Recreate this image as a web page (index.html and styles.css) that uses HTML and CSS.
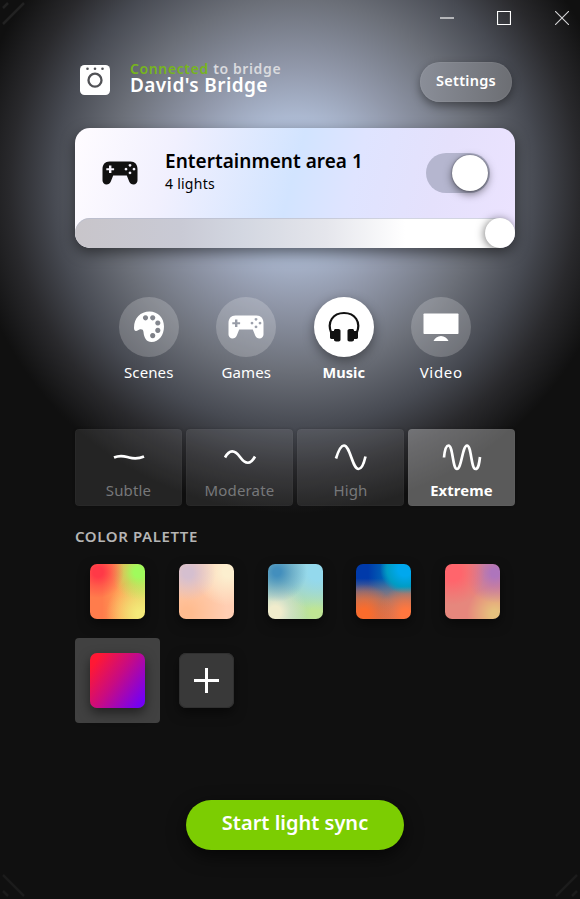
FILE: index.html
```html
<!DOCTYPE html>
<html lang="en">
<head>
<meta charset="utf-8">
<title>Light sync</title>
<link rel="stylesheet" href="styles.css">
</head>
<body>
<svg class="defs" width="0" height="0" aria-hidden="true">
  <symbol id="gamepad" viewBox="0 0 36 24">
    <path fill="currentColor" fill-rule="evenodd" d="M7.500.5h21C33 .5 35.500 3.500 35.500 8v11.500c0 2.200-1.700 4-4 4-2 0-3.500-1-4.300-3L24.800 14.500H11.200L8.800 20.500c-.8 2-2.300 3-4.300 3-2.300 0-4-1.800-4-4V8C.5 3.500 3 .5 7.500.5zM7 4.500v2.700H4.300v2H7v2.700h2.400V9.200h2.700v-2H9.400V4.500zM28 2.900a1.400 1.400 0 1 0 .01 0zM24 6.700a1.400 1.400 0 1 0 .01 0zM32 6.700a1.400 1.400 0 1 0 .01 0zM28 10.500a1.400 1.400 0 1 0 .01 0z"/>
  </symbol>
</svg>
<div class="window">
  <svg class="grip grip-tl" viewBox="0 0 26 26"><path d="M3 8 8 3M3 24 24 3"/></svg>
  <svg class="grip grip-bl" viewBox="0 0 26 26"><path d="M3 8 8 3M3 24 24 3"/></svg>
  <svg class="grip grip-br" viewBox="0 0 26 26"><path d="M3 8 8 3M3 24 24 3"/></svg>
  <div class="titlebar">
    <svg width="14" height="14" viewBox="0 0 14 14"><path d="M0 7h14" stroke="#b5b6b9" stroke-width="2"/></svg>
    <svg width="14" height="14" viewBox="0 0 14 14"><path d="M.5.5h13v13H.5z" fill="none" stroke="#fff" stroke-width="1.200"/></svg>
    <svg class="close" width="14" height="14" viewBox="0 0 14 14"><path d="M0 0l14 14M14 0 0 14" stroke="#d4d4d6" stroke-width="1.100"/></svg>
  </div>
  <header class="header">
    <svg class="bridge-icon" width="30" height="30" viewBox="0 0 30 30"><rect width="30" height="30" rx="4.500" fill="#fff"/><circle cx="15" cy="15.200" r="6.500" fill="none" stroke="#515256" stroke-width="2.300"/><g fill="#515256"><circle cx="7.500" cy="3.800" r="1.300"/><circle cx="15" cy="3.800" r="1.300"/><circle cx="22.500" cy="3.800" r="1.300"/></g></svg>
    <div class="bridge">
      <div class="status"><span>Connected</span> to bridge</div>
      <div class="name">David's Bridge</div>
    </div>
    <button class="settings">Settings</button>
  </header>
  <section class="area">
    <div class="area-main">
      <svg class="area-icon" width="36" height="24"><use href="#gamepad"/></svg>
      <div class="area-text">
        <div class="area-title">Entertainment area 1</div>
        <div class="area-sub">4 lights</div>
      </div>
      <div class="toggle"><div class="toggle-knob"></div></div>
    </div>
    <div class="slider"><div class="slider-knob"></div></div>
  </section>
  <nav class="modes">
    <div class="mode"><div class="disc"><svg width="32" height="32" viewBox="0 0 32 32"><path fill="#fff" fill-rule="evenodd" d="M16.500.5C25 .5 31 7 31 15.500 31 24 26 31 18.500 31c-5 0-7.500-4-8-10-.2-2.500-1.500-3-3.500-2.700-1.500.3-2.500 1.700-4 1.700C1.500 20 1 18.500 1 16.500 1 7 7.500.5 16.500.5zM12.500 4.200a2.600 2.600 0 1 0 .01 0zM19.700 4.200a2.600 2.600 0 1 0 .01 0zM24.800 9.400a2.600 2.600 0 1 0 .01 0zM24.800 16.800a2.600 2.600 0 1 0 .01 0zM19.700 22a2.600 2.600 0 1 0 .01 0z"/></svg></div><span>Scenes</span></div>
    <div class="mode"><div class="disc"><svg width="36" height="24"><use href="#gamepad"/></svg></div><span>Games</span></div>
    <div class="mode active"><div class="disc"><svg width="32" height="32" viewBox="0 0 32 32"><path d="M3 21C-1 11 5 2 16 2s17 9 13 19" fill="none" stroke="#111" stroke-width="2.200"/><path fill="#111" d="M2 20h4v-.5c0-1 .8-1.500 1.500-1.500h3c1 0 2 .7 2 1.800v9c0 1-.8 1.700-1.800 1.700H8c-1 0-2-.6-2-1.700V28H3.500c-1 0-1.500-.8-1.500-1.500zM30 20h-4v-.5c0-1-.8-1.500-1.500-1.500h-3c-1 0-2 .7-2 1.800v9c0 1 .8 1.700 1.800 1.700H24c1 0 2-.6 2-1.700V28h2.500c1 0 1.500-.8 1.500-1.500z"/></svg></div><span>Music</span></div>
    <div class="mode"><div class="disc"><svg width="36" height="28" viewBox="0 0 36 28"><rect x=".5" y=".5" width="35" height="20.500" rx=".8" fill="#fff"/><path fill="#fff" d="M10.500 28c1.300-2.800 4-5 7.500-5s6.200 2.200 7.500 5z"/></svg></div><span class="wide">Video</span></div>
  </nav>
  <div class="levels">
    <div class="level"><svg width="40" height="28" viewBox="0 0 40 28"><path d="M5 14.500c7-3 11-1 15 0s8 2 15-1"/></svg><span>Subtle</span></div>
    <div class="level"><svg width="40" height="28" viewBox="0 0 40 28"><path d="M5 14.500C9.500 6.500 14.500 6.500 20 14s10.500 8 15-.5"/></svg><span>Moderate</span></div>
    <div class="level"><svg width="40" height="28" viewBox="0 0 40 28"><path d="M5 15.500C7 9 9.500 2.500 13 2.500c6 0 8.500 23.500 14.500 23.500 3.500 0 5.500-6 7-12.500"/></svg><span>High</span></div>
    <div class="level active"><svg width="40" height="28" viewBox="0 0 40 28"><path d="M2 14.500C2.500 9 3.500 2.500 6.500 2.500c4.500 0 4 23.500 8.500 23.500S20.500 2.500 25 2.500s4 23.500 8.500 23.500c3 0 3.800-6 4.500-12"/></svg><span>Extreme</span></div>
  </div>
  <h2 class="palette-title">COLOR PALETTE</h2>
  <div class="palette">
    <div class="cell"><div class="swatch s1"></div></div>
    <div class="cell"><div class="swatch s2"></div></div>
    <div class="cell"><div class="swatch s3"></div></div>
    <div class="cell"><div class="swatch s4"></div></div>
    <div class="cell"><div class="swatch s5"></div></div>
    <div class="cell selected"><div class="swatch s6"></div></div>
    <div class="cell"><div class="swatch add"><svg width="25" height="25" viewBox="0 0 25 25"><path d="M0 12.500h25M12.500 0v25" stroke="#fff" stroke-width="3"/></svg></div></div>
  </div>
  <button class="start">Start light sync</button>
</div>
</body>
</html>
```
FILE: styles.css
```css
* { box-sizing: border-box; }
body { margin: 0; background: #101010; font-family: "Noto Sans", sans-serif; color: #fff; }
svg { display: block; flex: none; }
.defs { position: absolute; }
span, .status, .name, .area-title, .area-sub { white-space: nowrap; }
button { font-family: inherit; border: 0; color: #fff; padding: 0; font-weight: 600; white-space: nowrap; }
.window {
  position: relative; width: 580px; height: 899px; overflow: hidden; padding-left: 10px;
  display: flex; flex-direction: column; align-items: center;
  background: radial-gradient(circle at 295px 185px, #b9caea 0, #acb9d1 68px, #9198aa 118px, #6c7079 185px, #474a52 242px, #29292c 285px, #101010 328px);
}
.grip { position: absolute; width: 26px; height: 26px; fill: none; stroke: #1c1c1c; stroke-width: 2.500; }
.grip-tl { left: 0; top: 0; stroke: #222; }
.grip-bl { left: 0; bottom: 0; transform: scaleY(-1); }
.grip-br { right: 0; bottom: 0; transform: scale(-1); }
.titlebar { width: 100%; height: 36px; display: flex; justify-content: flex-end; align-items: center; gap: 43px; padding-right: 11px; }
.close { margin-left: 1px; }
.header { width: 440px; height: 92px; display: flex; padding: 26px 3px 0 5px; }
.bridge-icon { margin-top: 3px; }
.bridge { margin-left: 20px; flex: 1; margin-top: -1px; }
.status { font-size: 14px; line-height: 15px; font-weight: 600; color: #d9dade; letter-spacing: .62px; }
.status span { color: #77b51d; }
.name { font-size: 19px; line-height: 18px; font-weight: 600; letter-spacing: .4px; }
.settings { width: 92px; height: 40px; border-radius: 20px; font-size: 14.500px; letter-spacing: .25px; padding-bottom: 4px; background: linear-gradient(90deg, #8a8e98, #6c6e73); box-shadow: 0 4px 10px rgba(0,0,0,.4), inset 0 0 0 1px rgba(255,255,255,.05); }
.area { width: 440px; height: 120px; border-radius: 15px; overflow: hidden; box-shadow: 0 5px 14px rgba(0,0,0,.5); background: linear-gradient(105deg, #fffcff 0, #f1f0fe 22%, #d2e4ff 49%, #dfe4ff 62%, #e5e1fc 80%, #ece3ff 100%); }
.area-main { height: 90px; display: flex; align-items: center; padding: 0 25px 0 27px; }
.area-icon { color: #111; }
.area-text { margin-left: 27px; flex: 1; color: #000; padding-bottom: 2px; }
.area-title { font-size: 19px; line-height: 24px; font-weight: 600; letter-spacing: .03px; }
.area-sub { font-size: 14px; line-height: 22px; letter-spacing: .25px; }
.toggle { width: 64px; height: 40px; border-radius: 20px; background: #b5b6cf; padding: 2px; display: flex; justify-content: flex-end; }
.toggle-knob { width: 36px; height: 36px; border-radius: 50%; background: #fff; box-shadow: 0 3px 8px rgba(0,0,0,.5), 0 0 2px rgba(0,0,0,.5); }
.slider { height: 30px; border-radius: 15px; box-shadow: inset 0 1px 0 rgba(180,185,205,.6); background: linear-gradient(90deg, #c8c5ca 0, #c9cad5 24%, #d3d7e1 38%, #e5e6ec 57%, #fff 75%); display: flex; justify-content: flex-end; }
.slider-knob { width: 30px; height: 30px; border-radius: 50%; background: #fff; box-shadow: -1px 1px 8px rgba(0,0,0,.5); }
.modes { width: 390px; margin-top: 49px; height: 89px; display: flex; }
.mode { flex: 1; display: flex; flex-direction: column; align-items: center; font-size: 15px; line-height: 22px; letter-spacing: .1px; color: #fff; }
.wide { letter-spacing: .7px; }
.disc { width: 60px; height: 60px; border-radius: 50%; display: flex; align-items: center; justify-content: center; background: rgba(255,255,255,.2); margin-bottom: 4px; }
.mode.active .disc { background: #fff; box-shadow: 0 4px 12px rgba(0,0,0,.4); }
.mode.active { font-size: 14.500px; font-weight: 700; }
.levels { width: 440px; height: 77px; margin-top: 43px; display: grid; grid-template-columns: repeat(4, 107px); justify-content: space-between; }
.level { border-radius: 4px; background: rgba(255,255,255,.085); display: flex; flex-direction: column; align-items: center; padding-top: 14px; font-size: 15px; letter-spacing: .15px; line-height: 22px; color: #77787a; box-shadow: 0 0 3px rgba(0,0,0,.2), inset 0 0 0 1px rgba(255,255,255,.02); }
.level svg { fill: none; stroke: #fff; stroke-width: 2.700; margin-bottom: 8px; }
.level.active { background: rgba(255,255,255,.31); color: #fff; font-weight: 700; font-size: 14.800px; }
.palette-title { width: 440px; margin: 20px 0 16px; font-size: 15px; line-height: 20px; font-weight: 600; letter-spacing: .6px; color: #b5b5b5; }
.palette { width: 440px; display: grid; grid-template-columns: repeat(5, 85px); justify-content: space-between; row-gap: 4px; margin-top: -13px; }
.cell { height: 85px; border-radius: 4px; display: grid; place-items: center; }
.cell.selected { background: #414141; }
.swatch { width: 55px; height: 55px; border-radius: 7px; box-shadow: 0 5px 12px rgba(0,0,0,.5); }
.s1 { background: radial-gradient(circle at 8px 8px, #ff3947 5px, #ff394780 14px, #ff394700 26px), radial-gradient(circle at 49px 8px, #a0fb5c 5px, #a0fb5c80 14px, #a0fb5c00 28px), radial-gradient(circle at 50px 50px, #f4ea79 3px, #f4ea7900 34px), linear-gradient(90deg, #ff7c4c 22%, #ffa056 55%, #dcd060 100%); }
.s2 { background: radial-gradient(circle at 9px 9px, #d5bfcf 5px, #d5bfcf80 16px, #d5bfcf00 28px), radial-gradient(circle at 49px 8px, #fcefcf 5px, #fcefcf00 34px), radial-gradient(circle at 8px 49px, #ffbc90 5px, #ffbc9000 40px), #ffceb3; }
.s3 { background: radial-gradient(circle at 9px 8px, #438fbd 4px, #438fbd80 16px, #438fbd00 30px), radial-gradient(circle at 49px 8px, #94d9ed 8px, #94d9ed00 38px), radial-gradient(circle at 7px 48px, #f0eccc 6px, #f0eccc80 16px, #f0eccc00 32px), radial-gradient(circle at 48px 48px, #bfe594 5px, #bfe59400 36px), #a3cfc6; }
.s4 { background: radial-gradient(circle at 8px 50px, #fa6c2c 5px, #fa6c2c80 17px, #fa6c2c00 30px), radial-gradient(circle at 50px 50px, #ff773f 5px, #ff773f80 16px, #ff773f00 28px), radial-gradient(circle at 49px 5px, #00a8ee 7px, #009cc4 18px, #009cc400 25px), linear-gradient(rgba(140,121,125,0) 26%, rgba(135,118,128,.8) 50%, #a07770 66%, #c87058), linear-gradient(90deg, #003aaa 22%, #0064b6 52%, #0098cc 85%); }
.s5 { background: radial-gradient(circle at 8px 9px, #ff656c 8px, #ff656c80 19px, #ff656c00 32px), radial-gradient(circle at 50px 9px, #ae75bc 4px, #ae75bc80 16px, #ae75bc00 30px), radial-gradient(circle at 50px 50px, #e6c17d 4px, #e6c17d00 28px), #e6877d; }
.s6 { background: linear-gradient(125deg, #ff1834 12%, #c80b82 48%, #7300f5 92%); }
.add { background: #393939; display: grid; place-items: center; box-shadow: 0 5px 12px rgba(0,0,0,.5), inset 0 0 0 1px #303030; }
.start { width: 218px; height: 50px; margin-top: 77px; border-radius: 25px; background: #7ccd02; font-size: 20px; line-height: 46px; padding-bottom: 4px; box-shadow: 0 6px 18px rgba(0,0,0,.65); }
```
